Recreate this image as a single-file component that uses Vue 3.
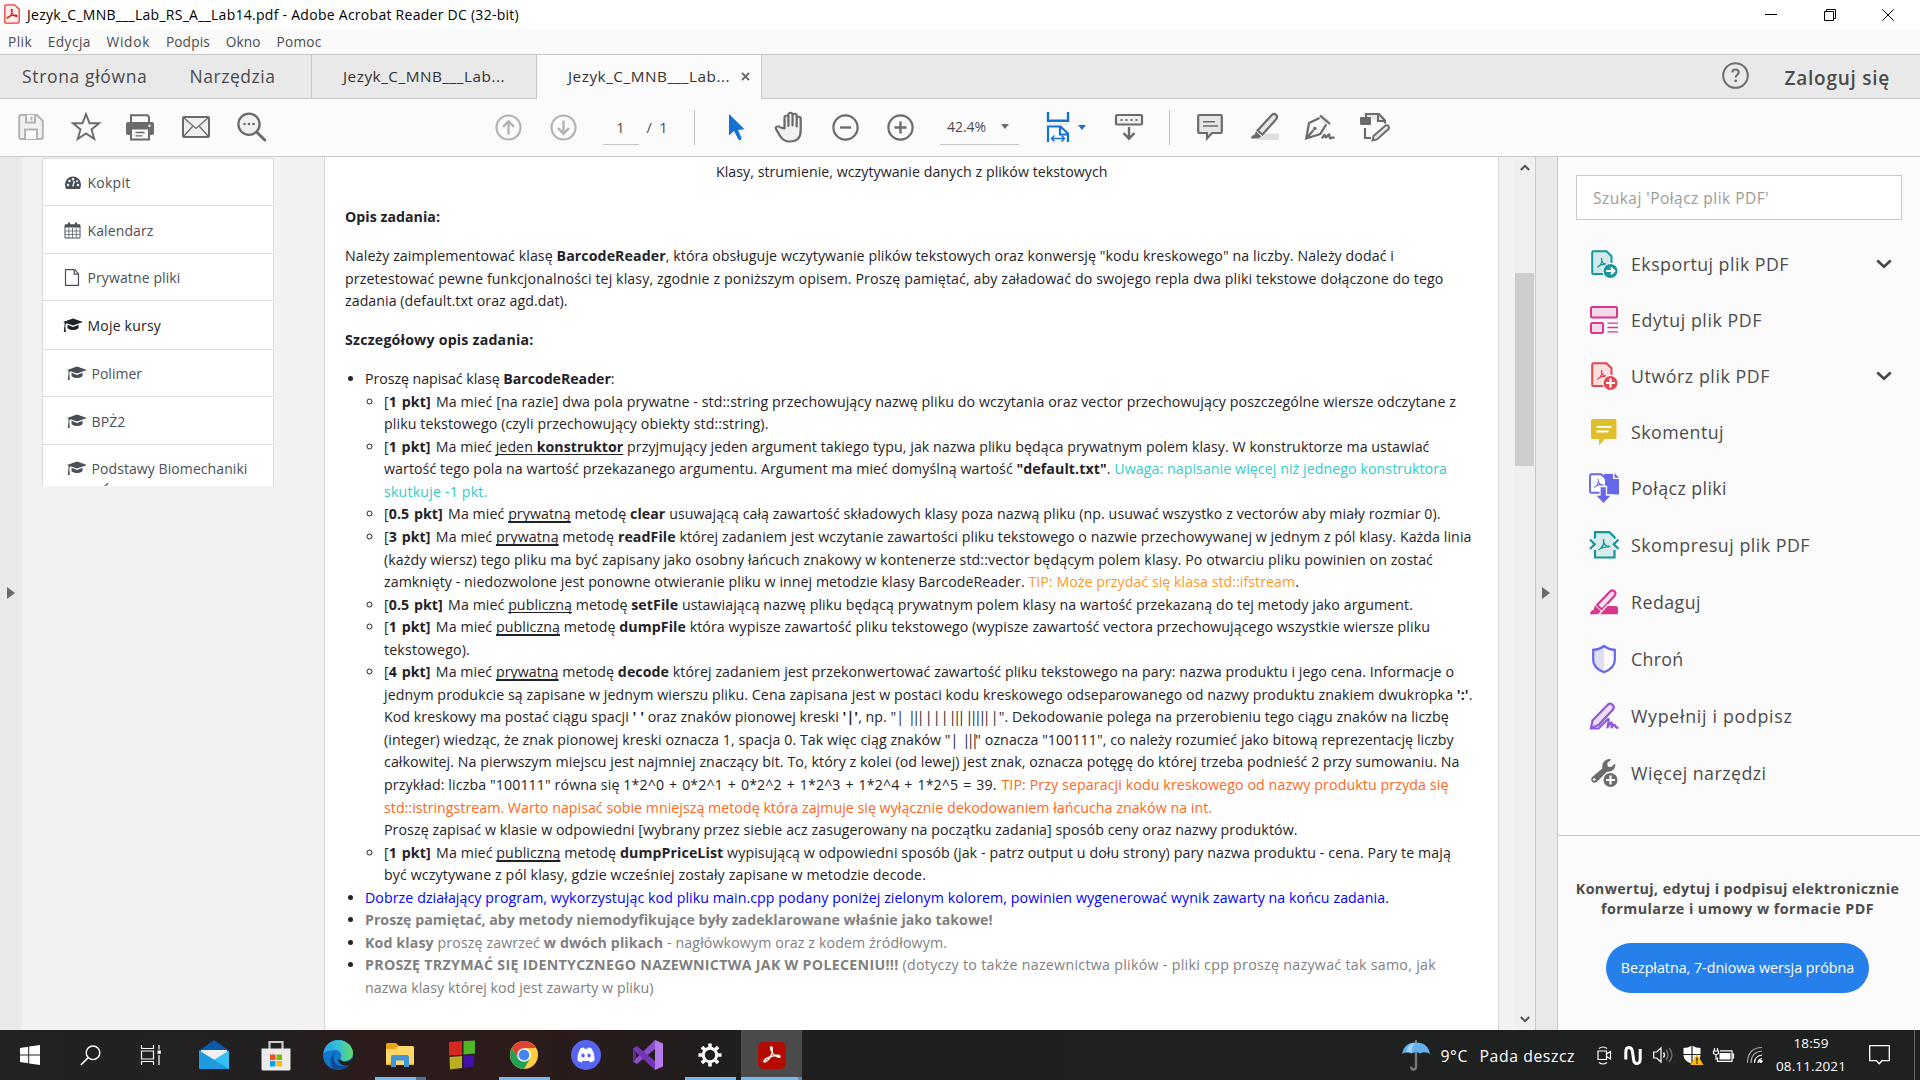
<script setup>
// Spreads a line of text over a given width in pixels through its letter spacing.
const vFit = {
  mounted(el, { value }) {
    const natural = el.getBoundingClientRect().width
    const count = el.textContent.length
    if (count > 1) el.style.letterSpacing = ((value - natural) / count).toFixed(4) + 'px'
  },
}

const menus = [
  { label: 'Plik', w: 24 },
  { label: 'Edycja', w: 43 },
  { label: 'Widok', w: 43.5 },
  { label: 'Podpis', w: 44 },
  { label: 'Okno', w: 35 },
  { label: 'Pomoc', w: 45 },
]

const nav = [
  { label: 'Kokpit', icon: 'dash', w: 43, h: 47 },
  { label: 'Kalendarz', icon: 'cal', w: 66, h: 48 },
  { label: 'Prywatne pliki', icon: 'file', w: 93, h: 47 },
  { label: 'Moje kursy', icon: 'cap', w: 73.5, h: 49, strong: true },
  { label: 'Polimer', icon: 'cap', w: 50.5, h: 47, sub: true },
  { label: 'BPŻ2', icon: 'cap', w: 34, h: 48, sub: true },
  { label: 'Podstawy Biomechaniki', icon: 'cap', w: 156, h: 47, sub: true },
]

const tools = [
  { label: 'Eksportuj plik PDF', icon: 'export', w: 158, h: 56, more: true },
  { label: 'Edytuj plik PDF', icon: 'edit', w: 131, h: 56 },
  { label: 'Utwórz plik PDF', icon: 'create', w: 139, h: 56, more: true },
  { label: 'Skomentuj', icon: 'comment', w: 93, h: 56 },
  { label: 'Połącz pliki', icon: 'merge', w: 96, h: 57 },
  { label: 'Skompresuj plik PDF', icon: 'compress', w: 179, h: 57 },
  { label: 'Redaguj', icon: 'redact', w: 70, h: 57 },
  { label: 'Chroń', icon: 'shield', w: 52.5, h: 57 },
  { label: 'Wypełnij i podpisz', icon: 'sign', w: 161.5, h: 57 },
  { label: 'Więcej narzędzi', icon: 'more', w: 135.5, h: 57 },
]
</script>

<template>
  <div class="screen">
    <header class="titlebar">
      <svg class="app-icon" width="16" height="20" viewBox="0 0 16 20">
        <path d="M2.5 .8h8l4.7 4.4v12.3q0 1.700-1.700 1.700h-11Q.8 19.200.8 17.500v-15Q.8.8 2.500.8z" fill="#fff0ee" stroke="#ec3a33" stroke-width="1.300" />
        <path d="M3.500 14.200c2.500-1 5-5 4.700-8.200-.2-1-1.200-.6-.9.600.7 3 3 5.600 5.300 5.800 1-.1.500-1.300-1-1.400-2.500 0-5 .8-7.700 2-1.200.8-1 1.400-.4 1.200z" fill="none" stroke="#d8231c" stroke-width="1.200" />
      </svg>
      <span v-fit="492" class="title-text">Jezyk_C_MNB___Lab_RS_A__Lab14.pdf - Adobe Acrobat Reader DC (32-bit)</span>
      <div class="win-controls">
        <svg width="12" height="12" viewBox="0 0 12 12"><path d="M0 5.500h12" stroke="#000" /></svg>
        <svg width="12" height="12" viewBox="0 0 12 12"><path d="M.5 2.500h9v9h-9zM2.500 2.500v-2h9v9h-2" fill="none" stroke="#000" /></svg>
        <svg width="12" height="12" viewBox="0 0 12 12"><path d="M.3.3l11.400 11.400M11.700.3L.3 11.700" stroke="#000" /></svg>
      </div>
    </header>

    <nav class="menubar">
      <span v-for="m in menus" :key="m.label" v-fit="m.w">{{ m.label }}</span>
    </nav>

    <div class="tabs">
      <div class="tabs-home">
        <span v-fit="125.5">Strona główna</span>
        <span v-fit="86">Narzędzia</span>
      </div>
      <div class="tab"><span v-fit="162">Jezyk_C_MNB___Lab...</span></div>
      <div class="tab active">
        <span v-fit="162">Jezyk_C_MNB___Lab...</span>
        <svg width="9" height="9" viewBox="0 0 9 9"><path d="M1 .8l7 7.400M8 .8L1 8.200" stroke="#666" stroke-width="1.900" /></svg>
      </div>
      <div class="account">
        <svg width="27" height="27" viewBox="0 0 27 27"><circle cx="13.500" cy="13.500" r="12.300" fill="none" stroke="#6e6e6e" stroke-width="2" /><path d="M10.400 10.600c0-4.200 6.300-4 6.300-.4 0 2.400-3 2.600-3 5.400" fill="none" stroke="#6e6e6e" stroke-width="2.100" /><circle cx="13.700" cy="18.800" r="1.400" fill="#6e6e6e" /></svg>
        <span v-fit="105.5">Zaloguj się</span>
      </div>
    </div>

    <div class="toolbar">
      <svg class="ic" width="26" height="28" viewBox="0 0 26 28">
        <path d="M1.200 4q0-2 2-2h15.800l5.800 5.800V24q0 2-2 2H3.200q-2 0-2-2z" fill="#f1f1f1" stroke="#b3b3b3" stroke-width="2" /><path d="M8 2v7.500h9V2M7 26v-9.500h12V26" fill="#fafafa" stroke="#b3b3b3" stroke-width="2" /><path d="M13.500 3.500v4" stroke="#b3b3b3" stroke-width="2" />
      </svg>
      <svg class="ic star" width="30" height="30" viewBox="0 0 30 30"><path d="M15 2.200l3.500 9h9.600l-7.600 6.200 2.800 9.700L15 21.500l-8.300 5.600 2.800-9.700L1.900 11.200h9.600z" fill="none" stroke="#6b6b6b" stroke-width="1.900" /></svg>
      <svg class="ic printer" width="28" height="28" viewBox="0 0 28 28"><path d="M5 9V2.200h16.500L23 4v5" fill="#fafafa" stroke="#6b6b6b" stroke-width="2" /><rect x="0" y="9" width="28" height="13" rx="2" fill="#6b6b6b" /><rect x="5" y="15.500" width="18" height="11" fill="#fafafa" stroke="#6b6b6b" stroke-width="2" /><path d="M9.500 19.500h9M9.500 22.800h7" stroke="#6b6b6b" stroke-width="1.300" /><circle cx="23.500" cy="12.700" r="1.200" fill="#fff" /></svg>
      <svg class="ic mail" width="28" height="22" viewBox="0 0 28 22"><rect x="1" y="1" width="26" height="20" rx="1" fill="#f0f0f0" stroke="#6b6b6b" stroke-width="2" /><path d="M2 2l12 10.500L26 2M2 20l8.500-9.500M26 20l-8.500-9.500" fill="none" stroke="#6b6b6b" stroke-width="1.300" /></svg>
      <svg class="ic find" width="30" height="30" viewBox="0 0 30 30"><circle cx="12" cy="12.200" r="10.600" fill="#f1f1f1" stroke="#6b6b6b" stroke-width="2.300" /><path d="M19.500 20l8.300 8" stroke="#6b6b6b" stroke-width="3" stroke-linecap="round" /><circle cx="7.500" cy="12" r="1.300" fill="#6b6b6b" /><circle cx="12" cy="12" r="1.300" fill="#6b6b6b" /><circle cx="16.500" cy="12" r="1.300" fill="#6b6b6b" /></svg>

      <svg class="ic up" width="27" height="27" viewBox="0 0 27 27"><g fill="none" stroke="#b3b3b3" stroke-width="2.200"><circle cx="13.500" cy="13.500" r="12" /><path d="M13.500 20.500V7.500M8 12.800l5.500-5.500 5.500 5.500" stroke-width="2.400" /></g></svg>
      <svg class="ic down" width="27" height="27" viewBox="0 0 27 27"><g fill="none" stroke="#b3b3b3" stroke-width="2.200"><circle cx="13.500" cy="13.500" r="12" /><path d="M13.500 6.500v13M8 14.200l5.500 5.500 5.500-5.500" stroke-width="2.400" /></g></svg>
      <div class="page-no">1</div>
      <div class="page-total">/&nbsp; 1</div>
      <div class="divider d1"></div>
      <svg class="ic arrow" width="17" height="28" viewBox="0 0 17 28"><path d="M1 1v21.500l5-4.500 4.300 8.200q1 1.600 2.600.6 1-.8.500-2L10 17l6.500-.8z" fill="#1473d2" /></svg>
      <svg class="ic hand" width="30" height="32" viewBox="0 0 30 32"><path d="M8.500 17.500V6.500q0-1.900 1.600-1.900t1.700 1.900V15 3.800q0-2 1.700-2t1.800 2V14.500 4.500q0-1.800 1.700-1.800t1.800 1.800V15.500 7.500q0-1.700 1.700-1.700t1.700 1.700v12q0 11-9.200 11-5.500 0-8.300-5.500L1.500 18.500q-1-2.200.6-3 1.500-.8 3 1z" transform="translate(-.5 0) scale(1.180 1)" fill="#f1f1f1" stroke="#6b6b6b" stroke-width="1.900" stroke-linejoin="round" /></svg>
      <svg class="ic minus" width="27" height="27" viewBox="0 0 27 27"><g fill="none" stroke="#6b6b6b" stroke-width="2.200"><circle cx="13.500" cy="13.500" r="12.100" /><path d="M8 13.500h11" stroke-width="2.400" /></g></svg>
      <svg class="ic plus" width="27" height="27" viewBox="0 0 27 27"><g fill="none" stroke="#6b6b6b" stroke-width="2.200"><circle cx="13.500" cy="13.500" r="12.100" /><path d="M7.500 13.500h12M13.500 7.500v12" stroke-width="2.400" /></g></svg>
      <div class="zoom"><span v-fit="39">42.4%</span><i class="caret"></i></div>
      <svg class="ic fit" width="24" height="30" viewBox="0 0 24 30"><path d="M2 0v8.700h20V0" fill="none" stroke="#1473d2" stroke-width="2.400" /><path d="M1 12h22" stroke="#cfe0f3" /><path d="M2 30V14.500h12.500l7.500 7V30M14 14.500v8h8" fill="none" stroke="#1473d2" stroke-width="2.200" /><path d="M6 26.500h12M8.500 23.500l-3 3 3 3M15.500 23.500l3 3-3 3" fill="none" stroke="#1473d2" stroke-width="1.500" /></svg>
      <i class="caret blue"></i>
      <svg class="ic keyb" width="28" height="28" viewBox="0 0 28 28"><rect x="1" y="2" width="26" height="9.500" rx="1" fill="#f1f1f1" stroke="#6b6b6b" stroke-width="2.200" /><path d="M5.500 7h2M10.500 7h2M15.500 7h2M20.500 7h2" stroke="#6b6b6b" stroke-width="2.200" /><path d="M14 14v11.500M8.500 20l5.500 5.700 5.500-5.700" fill="none" stroke="#6b6b6b" stroke-width="2.400" /></svg>
      <div class="divider d2"></div>
      <svg class="ic cmt" width="26" height="28" viewBox="0 0 26 28"><path d="M2.500 2h21q1.300 0 1.300 1.300v15.400q0 1.300-1.300 1.300H15l-5 5.500V20H2.500q-1.300 0-1.300-1.300V3.300Q1.200 2 2.500 2z" fill="#e6e6e6" stroke="#6b6b6b" stroke-width="2.200" /><path d="M6 8.800h12M6 13h15" stroke="#6b6b6b" stroke-width="1.500" /></svg>
      <svg class="ic hl" width="30" height="30" viewBox="0 0 30 30"><path d="M8 28l8-6.500h13V28z" fill="#dedede" /><path d="M7.500 18.500L22 2.800q2-1.700 4 0t.3 4.200L12.500 22.500z" fill="#e6e6e6" stroke="#6b6b6b" stroke-width="2.200" /><path d="M6 19.500l5.500 5-3 2H1q0-3 3.500-3.700z" fill="#6b6b6b" /></svg>
      <svg class="ic pen" width="31" height="30" viewBox="0 0 31 30"><path d="M18 2l8 7.500-4 4-7.500-7.500z" fill="#e6e6e6" /><path d="M16 3.500L26 12M15.500 6L5 11 2.200 26.500l14-4.500 6-9.500M2.500 26.200l7-8.200" fill="none" stroke="#6b6b6b" stroke-width="2.200" /><circle cx="10.800" cy="16.500" r="1.800" fill="#6b6b6b" /><path d="M18 26.500q3-5.500 3.200-2.500t2.300-.2 2 .3 2.500 1.500h2.500" fill="none" stroke="#6b6b6b" stroke-width="2.200" /></svg>
      <svg class="ic docp" width="32" height="30" viewBox="0 0 32 30"><path d="M7 5V2h13l6 6.500v3" fill="#e6e6e6" stroke="#6b6b6b" stroke-width="2.200" /><path d="M19 2.500V9h7" fill="none" stroke="#6b6b6b" stroke-width="2" /><rect x="1" y="5" width="11" height="8" rx="1" fill="#6b6b6b" /><path d="M6 16v10h6" fill="none" stroke="#6b6b6b" stroke-width="2.200" /><path d="M14.500 24L26.500 13.500q2-.8 3 .5t.3 2.800L18 27.500l-4.500 1z" fill="#e6e6e6" stroke="#6b6b6b" stroke-width="1.900" /></svg>
    </div>

    <main class="workspace">
      <div class="strip left"><i class="tri"></i></div>

      <div class="page">
        <aside class="course-nav">
          <div v-for="n in nav" :key="n.label" class="nav-item" :class="{ strong: n.strong, sub: n.sub }" :style="{ height: n.h + 'px' }">
            <svg v-if="n.icon === 'dash'" width="17" height="14" viewBox="0 0 17 14"><path d="M8.500.5a8 8 0 0 1 8 8q0 2.500-1.200 4.500H1.700Q.5 11 .5 8.500a8 8 0 0 1 8-8z" fill="currentColor" /><g fill="#fff"><circle cx="3.500" cy="9" r="1.200" /><circle cx="5" cy="5" r="1.200" /><circle cx="8.500" cy="3.300" r="1.200" /><circle cx="13.500" cy="9" r="1.200" /><circle cx="12.500" cy="5.200" r="1" /></g><path d="M8.300 10.500L9.800 5" stroke="#fff" stroke-width="1.300" /></svg>
            <svg v-else-if="n.icon === 'cal'" width="17" height="17" viewBox="0 0 17 17"><path d="M.5 3h15v13H.5z" fill="#fff" stroke="currentColor" /><path d="M.5 2.500h15v3H.5z" fill="currentColor" /><path d="M4.300 6v10M8 6v10M11.800 6v10M1 9h14M1 12.500h14" stroke="currentColor" stroke-width=".7" /><path d="M4.500.5v3M11.500.5v3" stroke="currentColor" stroke-width="2.200" /></svg>
            <svg v-else-if="n.icon === 'file'" width="17" height="17" viewBox="0 0 17 17"><path d="M1 .7h9l4 4v11.600H1zM9.700.7v4.500H14" fill="none" stroke="currentColor" stroke-width="1.200" /></svg>
            <svg v-else width="20" height="15" viewBox="0 0 20 15"><path d="M10 .5L20 4l-10 3.600L3.500 5.300 2.300 7l.5 7H.8L1.500 7 1.700 4.700 0 4z" fill="currentColor" /><path d="M4.500 6.800L10 8.900l5.500-2.100v3.400Q10 14 4.500 10.200z" fill="currentColor" /></svg>
            <span v-fit="n.w">{{ n.label }}</span>
          </div>
          <i class="accent"></i>
        </aside>

        <article class="doc">
          <p class="center"><span class="l" v-fit="391.500">Klasy, strumienie, wczytywanie danych z plików tekstowych</span></p>
          <p class="h first"><b class="l" v-fit="95">Opis zadania:</b></p>
          <p>
            <span class="l" v-fit="1049">Należy zaimplementować klasę <b>BarcodeReader</b>, która obsługuje wczytywanie plików tekstowych oraz konwersję "kodu kreskowego" na liczby. Należy dodać i</span>
            <span class="l" v-fit="1098.500">przetestować pewne funkcjonalności tej klasy, zgodnie z poniższym opisem. Proszę pamiętać, aby załadować do swojego repla dwa pliki tekstowe dołączone do tego</span>
            <span class="l" v-fit="222.500">zadania (default.txt oraz agd.dat).</span>
          </p>
          <p class="h"><b class="l" v-fit="188.500">Szczegółowy opis zadania:</b></p>
          <ul>
            <li>
              <span class="l" v-fit="249.500">Proszę napisać klasę <b>BarcodeReader</b>:</span>
              <ul>
                <li>
                  <span class="l" v-fit="1072">[<b>1 pkt]</b> Ma mieć [na razie] dwa pola prywatne - std::string przechowujący nazwę pliku do wczytania oraz vector przechowujący poszczególne wiersze odczytane z</span>
                  <span class="l" v-fit="384.500">pliku tekstowego (czyli przechowujący obiekty std::string).</span>
                </li>
                <li>
                  <span class="l" v-fit="1045.500">[<b>1 pkt]</b> Ma mieć <u>jeden <b>konstruktor</b></u> przyjmujący jeden argument takiego typu, jak nazwa pliku będąca prywatnym polem klasy. W konstruktorze ma ustawiać</span>
                  <span class="l" v-fit="1063">wartość tego pola na wartość przekazanego argumentu. Argument ma mieć domyślną wartość <b>"default.txt"</b>. <span class="cyan">Uwaga: napisanie więcej niż jednego konstruktora</span></span>
                  <span class="l cyan" v-fit="103.500">skutkuje -1 pkt.</span>
                </li>
                <li>
                  <span class="l" v-fit="1056.500">[<b>0.5 pkt]</b> Ma mieć <u class="thick">prywatną</u> metodę <b>clear</b> usuwającą całą zawartość składowych klasy poza nazwą pliku (np. usuwać wszystko z vectorów aby miały rozmiar 0).</span>
                </li>
                <li>
                  <span class="l" v-fit="1087.500">[<b>3 pkt]</b> Ma mieć <u class="thick">prywatną</u> metodę <b>readFile</b> której zadaniem jest wczytanie zawartości pliku tekstowego o nazwie przechowywanej w jednym z pól klasy. Każda linia</span>
                  <span class="l" v-fit="1049">(każdy wiersz) tego pliku ma być zapisany jako osobny łańcuch znakowy w kontenerze std::vector będącym polem klasy. Po otwarciu pliku powinien on zostać</span>
                  <span class="l" v-fit="915">zamknięty - niedozwolone jest ponowne otwieranie pliku w innej metodzie klasy BarcodeReader. <span class="amber">TIP: Może przydać się klasa std::ifstream</span>.</span>
                </li>
                <li>
                  <span class="l" v-fit="1029">[<b>0.5 pkt]</b> Ma mieć <u>publiczną</u> metodę <b>setFile</b> ustawiającą nazwę pliku będącą prywatnym polem klasy na wartość przekazaną do tej metody jako argument.</span>
                </li>
                <li>
                  <span class="l" v-fit="1046">[<b>1 pkt]</b> Ma mieć <u class="thick">publiczną</u> metodę <b>dumpFile</b> która wypisze zawartość pliku tekstowego (wypisze zawartość vectora przechowującego wszystkie wiersze pliku</span>
                  <span class="l" v-fit="86">tekstowego).</span>
                </li>
                <li>
                  <span class="l" v-fit="1070">[<b>4 pkt]</b> Ma mieć <u class="thick">prywatną</u> metodę <b>decode</b> której zadaniem jest przekonwertować zawartość pliku tekstowego na pary: nazwa produktu i jego cena. Informacje o</span>
                  <span class="l" v-fit="1088.500">jednym produkcie są zapisane w jednym wierszu pliku. Cena zapisana jest w postaci kodu kreskowego odseparowanego od nazwy produktu znakiem dwukropka <b>':'</b>.</span>
                  <span class="l bars" v-fit="1065.500">Kod kreskowy ma postać ciągu spacji <b>' '</b> oraz znaków pionowej kreski <b>'|'</b>, np. "<i>|</i>&nbsp; <i>|||</i> <i>|</i> <i>|</i> <i>|</i> <i>|||</i> <i>|||||</i> <i>|</i> ". Dekodowanie polega na przerobieniu tego ciągu znaków na liczbę</span>
                  <span class="l bars" v-fit="1070">(integer) wiedząc, że znak pionowej kreski oznacza 1, spacja 0. Tak więc ciąg znaków "<i>|</i>&nbsp; <i>|||</i>" oznacza "100111", co należy rozumieć jako bitową reprezentację liczby</span>
                  <span class="l" v-fit="1075.500">całkowitej. Na pierwszym miejscu jest najmniej znaczący bit. To, który z kolei (od lewej) jest znak, oznacza potęgę do której trzeba podnieść 2 przy sumowaniu. Na</span>
                  <span class="l" v-fit="1064.500">przykład: liczba "100111" równa się <span class="math">1*2^0 + 0*2^1 + 0*2^2 + 1*2^3 + 1*2^4 + 1*2^5 = 39. </span><span class="orange">TIP: Przy separacji kodu kreskowego od nazwy produktu przyda się</span></span>
                  <span class="l orange" v-fit="828">std::istringstream. Warto napisać sobie mniejszą metodę która zajmuje się wyłącznie dekodowaniem łańcucha znaków na int.</span>
                  <span class="l" v-fit="913.500">Proszę zapisać w klasie w odpowiedni [wybrany przez siebie acz zasugerowany na początku zadania] sposób ceny oraz nazwy produktów.</span>
                </li>
                <li>
                  <span class="l" v-fit="1067">[<b>1 pkt]</b> Ma mieć <u class="thick">publiczną</u> metodę <b>dumpPriceList</b> wypisującą w odpowiedni sposób (jak - patrz output u dołu strony) pary nazwa produktu - cena. Pary te mają</span>
                  <span class="l" v-fit="542">być wczytywane z pól klasy, gdzie wcześniej zostały zapisane w metodzie decode.</span>
                </li>
              </ul>
            </li>
            <li><span class="l blue-text" v-fit="1024">Dobrze działający program, wykorzystując kod pliku main.cpp podany poniżej zielonym kolorem, powinien wygenerować wynik zawarty na końcu zadania.</span></li>
            <li><b class="l gray" v-fit="627.500">Proszę pamiętać, aby metody niemodyfikujące były zadeklarowane właśnie jako takowe!</b></li>
            <li><span class="l gray" v-fit="582"><b>Kod klasy</b> proszę zawrzeć <b>w dwóch plikach</b> - nagłówkowym oraz z kodem źródłowym.</span></li>
            <li>
              <span class="l gray caps" v-fit="1071">
                <b>PROSZĘ TRZYMAĆ SIĘ IDENTYCZNEGO NAZEWNICTWA JAK W POLECENIU!!!</b> (dotyczy to także nazewnictwa plików - pliki cpp proszę nazywać tak samo, jak</span>
              <span class="l gray" v-fit="288.500">nazwa klasy której kod jest zawarty w pliku)</span>
            </li>
          </ul>
        </article>
      </div>

      <div class="scrollbar">
        <svg width="10" height="7" viewBox="0 0 10 7"><path d="M.8 6L5 1.800 9.200 6" fill="none" stroke="#505050" stroke-width="2" /></svg>
        <div class="thumb"></div>
        <svg class="end" width="10" height="7" viewBox="0 0 10 7"><path d="M.8 1L5 5.200 9.200 1" fill="none" stroke="#505050" stroke-width="2" /></svg>
      </div>
      <div class="strip right"><i class="tri"></i></div>

      <aside class="tools">
        <div class="search"><span v-fit="176">Szukaj 'Połącz plik PDF'</span></div>
        <div class="tool-list">
          <div v-for="t in tools" :key="t.label" class="tool" :style="{ height: t.h + 'px' }">
            <svg width="30" height="30" viewBox="0 0 30 30" fill="none">
              <g v-if="t.icon === 'export' || t.icon === 'create'" :stroke="t.icon === 'export' ? '#16969a' : '#e34850'">
                <path d="M4.500 2.200h13l5 5V25h-18q-1.300 0-1.300-1.300V3.500q0-1.300 1.300-1.300z" :fill="t.icon === 'export' ? '#d3e9ea' : '#fae0e1'" stroke-width="2" />
                <path d="M8 18.500c4-2 5.500-6 4.500-9.500M12.300 11c1 3 3 5 6.200 4.500M9.500 17c2.500-1.500 5-2 8-1.800" stroke-width="1.300" />
                <circle cx="21.500" cy="22" r="7.600" :fill="t.icon === 'export' ? '#16969a' : '#e34850'" stroke="#fbfbfb" stroke-width="1.200" />
                <path v-if="t.icon === 'export'" d="M17 22h7.500M22 18.800l3.200 3.200-3.200 3.200" stroke="#fff" stroke-width="2.200" />
                <path v-else d="M17 22h9M21.500 17.500v9" stroke="#fff" stroke-width="2.200" />
              </g>
              <g v-else-if="t.icon === 'edit'" stroke="#d83790" stroke-width="2"><rect x="2" y="2" width="26" height="10.500" rx="1" fill="#f7d8e9" /><rect x="2" y="18" width="12" height="10" rx="1" fill="#f7d8e9" /><path d="M18.500 18.200H29M18.500 22.500H29M18.500 26.800H29" stroke-width="1.300" /></g>
              <g v-else-if="t.icon === 'comment'"><path d="M3.500 2h22.500q1.500 0 1.500 1.500v17q0 1.500-1.500 1.500H16l-6 6.500V22H3.500Q2 22 2 20.500v-17Q2 2 3.500 2z" fill="#dfbf2c" /><path d="M7.500 9.800h15M7.500 14.500h12" stroke="#fff" stroke-width="1.800" /></g>
              <g v-else-if="t.icon === 'merge'"><path d="M15 1h9v5h6v15.500H15z" fill="#6767ec" /><path d="M25.500 0L30 4.700h-4.500z" fill="#6767ec" /><path d="M2.500 1.200h9.500l5 4.500v14H2.500q-1.500 0-1.500-1.500v-15.500q0-1.500 1.500-1.500z" fill="#fff" stroke="#6767ec" stroke-width="1.900" /><path d="M5 14.500c3-1.500 5-5 4.200-8.500M9 8c1 3 3 4.500 6 4.200M7 13q3-1.500 7-1.200" stroke="#6767ec" stroke-width="1.100" /><path d="M11 13.500h6.500V22H23l-8.500 9L6 22h5z" fill="#6767ec" stroke="#fbfbfb" stroke-width="1.300" /></g>
              <g v-else-if="t.icon === 'compress'" stroke="#16969a"><path d="M6 9V2.200h14.500l5 5V9M6 20v7.500h19.500V20" fill="#d9ecec" stroke-width="2.200" /><path d="M6 8h19v12H6z" fill="#d9ecec" stroke="none" /><path d="M1 9.500l4.700 4.800L1 19M29.500 9.500l-4.700 4.800 4.700 4.700" stroke-width="2.300" /><path d="M9.500 20c3.500-2 6-6 5-11M14.500 12c1 3 3.500 5 6.500 4M11 18.500q4-2 9-1.500" stroke-width="1.400" /></g>
              <g v-else-if="t.icon === 'redact'"><path d="M15.500 19H26q3 0 3 2v5q0 1.300-1.500 1.300h-17z" fill="#d83790" /><path d="M8 18L21.500 4q2.200-1.500 4 .2t.3 4.300L13 22.500z" fill="#f9e0ee" stroke="#d83790" stroke-width="2.200" /><path d="M6 18.500l6 5.800-2.500 2.900H1q0-3.500 3.500-4.500z" fill="#d83790" /><path d="M9 28.500L19 17.500" stroke="#fbfbfb" stroke-width="1.200" /></g>
              <g v-else-if="t.icon === 'shield'"><path d="M15 1.700L4 6v10q0 7 11 12z" fill="#dedef8" /><path d="M15 2q5 3.800 10.800 3.800V16q0 8-10.800 12.300Q4.200 24 4.200 16V5.800Q10 5.800 15 2z" stroke="#6767ec" stroke-width="2.200" /></g>
              <g v-else-if="t.icon === 'sign'" stroke="#9256d9"><path d="M3.500 19.500L19 3.500q2.300-1.700 4.500.3t.7 4.500L9.500 24l-7.500 3z" fill="#ebdff7" stroke-width="2.200" /><path d="M1.500 27.500h8L19 18q1-1 .5 2.500l-1 6q4-6.500 4.300-4.500t-.3 4.500q3-4 3.500-2t3.500 2.500" stroke-width="2.200" stroke-linejoin="round" /></g>
              <g v-else><path d="M3.500 20.500L14.500 11q-1-5 2.500-8t7-1.500l-4.300 4 .5 3.800 3.800.5 4-4q1 3.500-1.500 6.500t-7 2.500L8.500 25.500q-2.500 2-5 0t0-5z" transform="scale(.93)" fill="#6b6b6b" /><circle cx="5.200" cy="21.500" r="1.300" fill="#fff" /><circle cx="21.500" cy="22" r="7.600" fill="#6b6b6b" stroke="#fbfbfb" stroke-width="1.200" /><path d="M17 22h9M21.500 17.500v9" stroke="#fff" stroke-width="2.200" /></g>
            </svg>
            <span v-fit="t.w">{{ t.label }}</span>
            <svg v-if="t.more" class="chev" width="16" height="10" viewBox="0 0 16 10"><path d="M1.300 1.500L8 7.800l6.700-6.300" fill="none" stroke="#444" stroke-width="2.600" /></svg>
          </div>
        </div>
        <div class="promo">
          <b v-fit="323.500">Konwertuj, edytuj i podpisuj elektronicznie</b>
          <b v-fit="273">formularze i umowy w formacie PDF</b>
          <div class="trial"><span v-fit="233.500">Bezpłatna, 7-dniowa wersja próbna</span></div>
        </div>
      </aside>
    </main>

    <footer class="taskbar">
      <div class="task"><svg width="20" height="20" viewBox="0 0 20 20"><path d="M0 2.900L8.200 1.700v7.800H0zM9.200 1.500L20 0v9.500H9.200zM0 10.500h8.200v7.800L0 17.100zM9.200 10.500H20V20L9.200 18.500z" fill="#fff" /></svg></div>
      <div class="task"><svg width="21" height="21" viewBox="0 0 21 21"><circle cx="13" cy="7.800" r="6.800" fill="none" stroke="#fff" stroke-width="1.400" /><path d="M8.200 12.600L.8 20" stroke="#fff" stroke-width="1.500" /></svg></div>
      <div class="task"><svg width="22" height="20" viewBox="0 0 22 20"><path d="M1.500 0v3.500h12V0M1.500 20v-3.500h12V20M1.500 6h12v8h-12zM19 0v4.500M19 10v10" fill="none" stroke="#fff" stroke-width="1.200" /><path d="M17.500 5.500h3.300v3.300h-3.300z" fill="#fff" /></svg></div>
      <div class="task"><svg width="30" height="30" viewBox="0 0 30 30"><path d="M0 10.500L15 0l15 10.500V15H0z" fill="#0a5aa8" /><path d="M2 10h26v12H2z" fill="#eee" /><path d="M0 10.500L15 20 0 29z" fill="#28a8ea" /><path d="M30 10.500V29H0z" fill="#35c1f5" /><path d="M0 10.500L30 29H0z" fill="#1e9ae0" /><path d="M3 10.500h24L15 19z" fill="#f1f1f1" /></svg></div>
      <div class="task"><svg width="30" height="31" viewBox="0 0 30 31"><path d="M8.500 10V2h13v8" fill="none" stroke="#ccc" stroke-width="2.200" /><path d="M.5 8.500h29V29q0 1.500-1.500 1.500H2Q.5 30.500.5 29z" fill="#ececec" /><path d="M9 14.500h5.500V20H9z" fill="#f25022" /><path d="M15.500 14.500H21V20h-5.500z" fill="#7fba00" /><path d="M9 21h5.500v5.500H9z" fill="#00a4ef" /><path d="M15.500 21H21v5.500h-5.500z" fill="#ffb900" /></svg></div>
      <div class="task"><svg width="30" height="30" viewBox="0 0 30 30"><defs><linearGradient id="edgeTop"><stop offset="0" stop-color="#2ba7e5" /><stop offset=".5" stop-color="#35bfd6" /><stop offset="1" stop-color="#63dd63" /></linearGradient></defs><circle cx="15" cy="15" r="15" fill="#1176cd" /><path d="M.5 13C2 5 8 0 15 0c9 0 15 6.500 15 13 0 6-5 8-9 8-3.500 0-4.500-1-4-2 3-3.500 1-9-5-9-5 0-9 1.500-11.500 3z" fill="url(#edgeTop)" /><path d="M12.500 12.500c-5 6 0 17 13.500 13-4 4-9 5-14 4-5-2-7-12 .5-17z" fill="#0c4a96" /><path d="M17 19q1.500 3 6 2.800 3-.3 7-3.800-1 5-5 7.500-8 1-10-5.500z" fill="#221d1d" /></svg></div>
      <div class="task run more"><svg width="28" height="24" viewBox="0 0 28 24"><path d="M0 1.500Q0 0 1.500 0H10l3 3h-13z" fill="#e8a317" /><path d="M0 3h26.500Q28 3 28 4.500V22H0z" fill="#ffd766" /><path d="M0 3h12L9 6H0z" fill="#e8a317" /><path d="M5 24V14q0-2 2-2h14q2 0 2 2v10h-5v-6.500h-8V24z" fill="#3f95d8" /><path d="M0 20.500h5V22H0zM23 20.500h5V22h-5z" fill="#e9b437" /></svg></div>
      <div class="task"><svg width="28" height="30" viewBox="0 0 28 30"><path d="M1 2l13-1v14L1 15.500z" fill="#d6281f" /><path d="M15.500 1L27 .5v13l-11.500 1z" fill="#4fb524" /><path d="M1.500 17l12.500-1v12L2 29.500z" fill="#bcae22" /><path d="M15.500 16l11-1-1 11.500-10 1z" fill="#4412a8" /></svg></div>
      <div class="task run"><svg width="28" height="28" viewBox="0 0 28 28"><circle cx="14" cy="14" r="14" fill="#ffcd42" /><path d="M1.900 7A14 14 0 0 1 26.100 7H14l-6 10.500z" fill="#e34133" /><path d="M1.900 7A14 14 0 0 0 14 28l6-10.500H8z" fill="#1fa254" /><circle cx="14" cy="14" r="6.800" fill="#fff" /><circle cx="14" cy="14" r="5.400" fill="#4285f4" /></svg></div>
      <div class="task"><svg width="30" height="30" viewBox="0 0 30 30"><circle cx="15" cy="15" r="15" fill="#5865f2" /><path d="M9.500 8.500Q11 7.600 12.600 7.500l.8 1.300h3.200l.8-1.300q1.600.1 3.100 1Q24 14 23.500 20.500q-2 1.600-4.300 2l-1-1.800q-3.200.8-6.400 0l-1 1.800q-2.300-.4-4.300-2Q6 14 9.500 8.500z" fill="#fff" /><ellipse cx="12" cy="15.500" rx="1.700" ry="2" fill="#5865f2" /><ellipse cx="18" cy="15.500" rx="1.700" ry="2" fill="#5865f2" /></svg></div>
      <div class="task"><svg width="30" height="30" viewBox="0 0 30 30"><path d="M22 0l8 3.500v23L22 30z" fill="#b57bee" /><path d="M22 0v9L4 24l-4-2.500z" fill="#8a4fc9" /><path d="M0 8.500L4 6l18 15v9L0 9.500z" fill="#7436b8" /><path d="M0 8.500l3 3v8L0 21.500z" fill="#5d2c95" /></svg></div>
      <div class="task run"><svg width="24" height="24" viewBox="0 0 24 24"><circle cx="12" cy="12" r="6.700" fill="none" stroke="#fff" stroke-width="3" /><g stroke="#fff" stroke-width="3.600"><path d="M12 .5v4M12 19.500v4M.5 12h4M19.500 12h4M3.900 3.900l2.800 2.800M17.300 17.300l2.800 2.800M20.100 3.900l-2.800 2.800M6.700 17.300l-2.800 2.800" /></g></svg></div>
      <div class="task run current"><svg width="28" height="27" viewBox="0 0 28 27"><rect width="28" height="27" rx="5" fill="#b30b00" /><path d="M7 20c5-2 8-8 7.200-14-.5-1.800-2-1-1.500.6 1 4.400 4.500 8 8.300 8.600 1.500 0 1.200-1.700-.8-2-4 0-8 1.300-12.200 3.500-2.300 1.500-2.500 3.300-1 3.300z" fill="none" stroke="#fff" stroke-width="1.500" /></svg></div>

      <div class="tray">
        <svg class="umb" width="28" height="31" viewBox="0 0 28 31"><path d="M14 12v14.500q0 3-2.500 3t-2.500-3" fill="none" stroke="#777" stroke-width="2.400" /><path d="M14 0v4" stroke="#999" stroke-width="1.500" /><path d="M0 14Q2 2.500 14 2.500T28 14q-2-2-4.500-1.500Q21 11.500 18.500 13.500q-4.500-2.500-9 0Q7 11.500 4.500 12.500 2 12 0 14z" fill="#63b0ee" /><path d="M9.500 13.500Q10 5 14 2.500 5 4 4.500 12.500 7 11.500 9.500 13.500z" fill="#a3d4fb" /></svg>
        <span class="wx" v-fit="27.500">9°C</span>
        <span class="wx2" v-fit="95.500">Pada deszcz</span>
        <svg class="t1" width="15" height="19" viewBox="0 0 15 19"><path d="M1 5h8.500v8.500H1zM9.500 8L13.500 5.500v7.500L9.500 10.500M2 2.500q4-3 8 0M2 16.500q4 3 8 0" fill="none" stroke="#fff" stroke-width="1.200" /></svg>
        <svg class="t2" width="18" height="19" viewBox="0 0 18 19"><path d="M1.800 13.500V6q0-4.500 3-4.500Q8 1.500 8.500 6l1 7q.5 4.500 3.500 4.500t3.200-4.500V3" fill="none" stroke="#fff" stroke-width="3" /></svg>
        <svg class="t3" width="21" height="18" viewBox="0 0 21 18"><path d="M.7 6h3L8 2v14l-4.300-4h-3z" fill="none" stroke="#fff" stroke-width="1.200" /><path d="M10.500 6.500q2 2.500 0 5" fill="none" stroke="#fff" stroke-width="1.300" /><path d="M13 4q4 5 0 10M16 2q6 7 0 14" fill="none" stroke="#777" stroke-width="1.300" /></svg>
        <svg class="t4" width="21" height="21" viewBox="0 0 21 21"><path d="M9 .5q4 2.500 8.500 2.500v7Q17.500 16 9 19 .5 16 .5 10V3Q5 3 9 .5z" fill="#fff" /><path d="M9 0v19M0 9.500h18" stroke="#202020" stroke-width="1.200" /><path d="M14 9l6.500 11h-13z" fill="#fdb813" /><path d="M14 12.500v4M14 17.300v1.500" stroke="#222" stroke-width="1.300" /></svg>
        <svg class="t5" width="21" height="15" viewBox="0 0 21 15"><path d="M6.500 5h11v6.500h-11z" fill="#fff" /><path d="M7 2.800h12v10.500H4.500V9.500M19 6h1.500v4H19" fill="none" stroke="#fff" stroke-width="1.200" /><path d="M1.500 0v2.500M4.500 0v2.500M.5 3h5v2.500q-2.500 2-5 0zM3 6v6" fill="#202020" stroke="#fff" stroke-width="1.200" /></svg>
        <svg class="t6" width="18" height="18" viewBox="0 0 18 18"><g fill="none" stroke-width="1.200"><path d="M1.500 17Q1.500 2 16 1.500M5 17Q5 6 16 5" stroke="#aaa" /><path d="M8.500 17q0-7 7.500-8M12 17q0-3.500 4-4.500" stroke="#fff" /></g><circle cx="14.800" cy="15.300" r="1.700" fill="#fff" /></svg>
        <div class="clock"><span v-fit="35">18:59</span><span v-fit="70">08.11.2021</span></div>
        <svg class="t7" width="21" height="20" viewBox="0 0 21 20"><path d="M.7.7h19.600v15h-7.300l-2.800 3-2.700-3H.7z" fill="none" stroke="#fff" stroke-width="1.300" /></svg>
        <i class="peek"></i>
      </div>
    </footer>
  </div>
</template>

<style>
body { margin: 0; overflow: hidden; }
</style>

<style scoped>
.screen {
  width: 1920px; height: 1080px; display: flex; flex-direction: column;
  background: #fbfbfb; color: #4b4b4b; overflow: hidden;
  font-family: "Open Sans", "Noto Sans", sans-serif; white-space: nowrap;
}
.screen * { box-sizing: border-box; }
svg { display: block; flex: none; overflow: visible; }
span { flex: none; }

.titlebar { height: 29px; background: #fff; display: flex; align-items: center; padding-left: 4px; color: #000; font-size: 14px; }
.app-icon { margin-top: -2px; }
.title-text { margin-left: 7px; }
.win-controls { margin-left: auto; margin-right: 26px; display: flex; gap: 46.500px; }

.menubar { height: 26px; background: #fafafa; border-bottom: 1px solid #c8c8c8; display: flex; align-items: center; gap: 15.800px; padding-left: 8px; font-size: 13.700px; }

.tabs { height: 44px; display: flex; background: #e9e9e9; }
.tabs > div { border-bottom: 1px solid #c8c8c8; display: flex; align-items: center; }
.tabs-home { width: 312px; border-right: 1px solid #c8c8c8; padding-left: 22px; gap: 42px; font-size: 17.500px; padding-bottom: 1px; }
.tab { width: 225px; border-right: 1px solid #c8c8c8; padding-left: 31px; font-size: 15.300px; color: #323232; }
.tabs > .tab { padding-bottom: 1px; }
.tabs > .active { background: #fbfbfb; border-bottom-color: #fbfbfb; }
.active svg { margin-left: 11px; }
.account { flex: 1; justify-content: flex-end; gap: 36px; padding-right: 30px; font-size: 19px; font-weight: 600; }
.account svg { margin-top: -2px; }
.account span { padding-top: 3px; }

.toolbar { height: 58px; border-bottom: 1px solid #cacaca; background: #fbfbfb; display: flex; align-items: center; padding-left: 18px; padding-bottom: 1px; font-size: 14.500px; }
.star { margin-left: 27px; }
.printer { margin-left: 25px; }
.mail { margin-left: 28px; }
.find { margin-left: 27px; }
.up { margin-left: 227.500px; }
.down { margin-left: 28px; }
.page-no { width: 36px; height: 35px; margin-left: 26px; border-bottom: 1px solid #c6c6c6; text-align: center; line-height: 35px; }
.page-total { width: 22px; margin-left: 8px; }
.divider { width: 1px; height: 35px; background: #c6c6c6; }
.d1 { margin-left: 25px; }
.arrow { margin-left: 33px; }
.hand { margin-left: 30px; }
.minus { margin-left: 27px; }
.plus { margin-left: 28px; }
.zoom { width: 79px; height: 35px; margin-left: 26.500px; border-bottom: 1px solid #c6c6c6; display: flex; align-items: center; padding-left: 7px; gap: 15px; font-size: 14px; }
.caret { width: 0; height: 0; border: 4.500px solid transparent; border-top: 5.500px solid #6b6b6b; border-bottom: 0; }
.caret.blue { border-top-color: #1473d2; margin-left: 8px; }
.fit { margin-left: 27px; }
.keyb { margin-left: 28.500px; }
.d2 { margin-left: 26px; }
.cmt { margin-left: 27px; }
.hl { margin-left: 27px; }
.pen { margin-left: 24.500px; }
.docp { margin-left: 24px; }

.workspace { height: 873px; display: flex; }
.strip { background: #e9e9e9; display: flex; align-items: center; padding-bottom: 2px; }
.strip.left { width: 22px; padding-left: 7px; }
.strip.right { width: 23px; border-left: 1px solid #c8c8c8; border-right: 1px solid #c8c8c8; padding-left: 6px; }
.tri { width: 0; height: 0; border: 6.500px solid transparent; border-left: 8px solid #6b6b6b; border-right: 0; }

.page { width: 1493px; background: #f2f2f2; display: flex; align-items: stretch; }
.course-nav { width: 302px; padding: 1px 50px 0 20px; position: relative; height: 329px; overflow: hidden; }
.nav-item { background: #fff; border: 1px solid #dcdcdc; border-bottom: 0; display: flex; align-items: center; padding: 1px 0 0 20px; color: #495057; font-size: 14px; }
.nav-item svg { width: 20px; margin-right: 4.500px; }
.nav-item.sub { padding-left: 24px; }
.strong { color: #1d2125; }
.accent { position: absolute; left: 82px; top: 326px; width: 5px; height: 3px; background: #70757a; clip-path: polygon(60% 0, 100% 0, 50% 100%, 0 100%); }

.doc { width: 1175px; background: #fff; border-left: 1px solid #d6d6d6; border-right: 1px solid #d6d6d6; padding: 3.500px 0 0 20px; color: #1f2328; font-size: 14.200px; line-height: 22.540px; overflow: hidden; }
.doc p { margin: 0 0 16.400px; }
.doc .center { margin: 0 0 23.200px; padding-left: 371px; }
.doc ul { margin: 0; padding-left: 20px; list-style: disc; }
.doc ul ul { padding-left: 19px; list-style: circle; }
.l { display: block; width: max-content; }
.l u { text-underline-offset: 2px; text-decoration-thickness: 1px; text-decoration-skip-ink: none; }
.l u.thick { text-decoration-thickness: 2px; }
ul ul li > .l:first-child > b:first-child { word-spacing: 1px; margin-right: 1.500px; }
.bars i { font-style: normal; letter-spacing: -3.500px; }
.math { word-spacing: 1.100px; }
.cyan { color: #33cccc; }
.amber { color: #ff9a1f; }
.orange { color: #ff6820; }
.blue-text { color: #0000ff; }
.gray { color: #808080; }

.scrollbar { width: 20px; background: #f0f0f0; display: flex; flex-direction: column; align-items: flex-start; padding-top: 7px; }
.scrollbar svg { margin-left: 4.500px; }
.thumb { width: 19px; height: 193px; background: #cdcdcd; margin-top: 102px; }
.scrollbar .end { margin-top: auto; margin-bottom: 7px; }

.tools { flex: 1; background: #fbfbfb; padding-top: 18px; }
.search { width: 326px; height: 45px; margin-left: 18px; border: 1px solid #c8c8c8; background: #fff; display: flex; align-items: center; padding-left: 16px; font-size: 15.500px; color: #9b9b9b; }
.tool-list { height: 616px; padding-top: 15.500px; border-bottom: 1px solid #c8c8c8; }
.tool { display: flex; align-items: center; padding-left: 30.500px; font-size: 17.800px; }
.tool span { margin-left: 12.500px; }
.chev { margin-left: auto; margin-right: 28px; }
.promo { display: flex; flex-direction: column; align-items: center; padding-top: 43px; font-size: 14.300px; line-height: 20px; padding-right: 3px; }
.promo b { font-weight: 700; }
.trial { width: 263px; height: 50px; margin-top: 24px; border-radius: 25px; background: #2680eb; color: #fff; display: flex; align-items: center; justify-content: center; font-size: 14.300px; }

.taskbar { height: 50px; display: flex; color: #fff; background: linear-gradient(90deg, #222 0, #232020 280px, #2c1b1b 370px, #2b1b1b 540px, #241d1d 660px, #1f1f1f 780px, #1f2121 100%); }
.task { width: 62px; height: 50px; display: flex; align-items: center; justify-content: center; position: relative; }
.task:nth-child(1) { width: 60px; }
.task:nth-child(2) { width: 60px; }
.task:nth-child(3) { width: 62px; }
.task:nth-child(4) { width: 63px; }
.task.run::after { content: ""; position: absolute; left: 6px; right: 5px; bottom: 0; height: 3px; background: #76b9ed; }
.task.more::after { background: linear-gradient(90deg, #76b9ed 41px, #4a7396 41px); }
.task.current { background: #4b4b4b; width: 61px; padding-right: 0; }
.task.current::after { left: 0; right: 0; background: linear-gradient(90deg, #76b9ed 57px, #5a8db5 57px); }
.tray { flex: 1; display: flex; align-items: center; }
.umb { margin-left: 600px; }
.wx, .wx2 { font-size: 15.800px; padding-top: 2px; }
.wx { margin-left: 10.500px; }
.wx2 { margin-left: 11.500px; }
.t1 { margin-left: 22px; }
.t2 { margin-left: 12px; }
.t3 { margin-left: 11px; }
.t4 { margin-left: 9px; }
.t5 { margin-left: 9px; }
.t6 { margin-left: 12px; }
.clock { margin-left: 12px; width: 70px; display: flex; flex-direction: column; align-items: center; font-size: 13.500px; line-height: 23px; padding-bottom: 0; }
.t7 { margin-left: 23px; }
.peek { width: 1px; height: 50px; background: #666; margin-left: 24px; }
</style>
